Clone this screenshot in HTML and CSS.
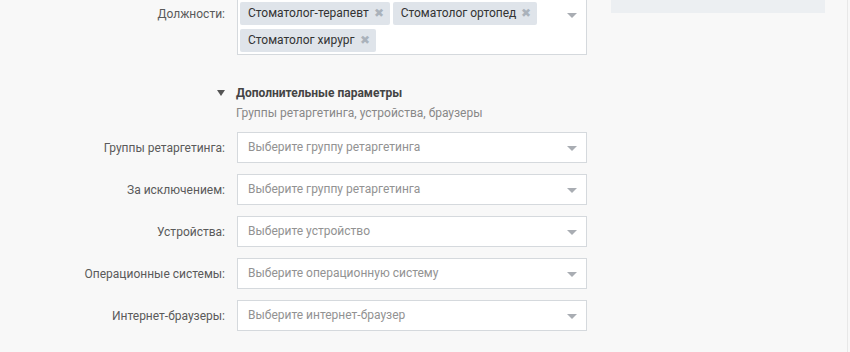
FILE: index.html
```html
<!DOCTYPE html>
<html lang="ru">
<head>
    <meta charset="UTF-8">
    <title>Параметры таргетинга</title>
    <link rel="stylesheet" href="styles.css">
</head>
<body>
    <div class="page">
        <div class="form">
            <div class="row row-multi">
                <div class="label">Должности:</div>
                <div class="field multi">
                    <div class="tags">
                        <span class="tag">Стоматолог-терапевт <span class="tag-x">&#x2716;</span></span>
                        <span class="tag">Стоматолог ортопед <span class="tag-x">&#x2716;</span></span>
                        <span class="tag">Стоматолог хирург <span class="tag-x">&#x2716;</span></span>
                    </div>
                    <span class="arrow arrow-top"></span>
                </div>
            </div>

            <div class="extra">
                <div class="extra-title"><span class="toggle"></span>Дополнительные параметры</div>
                <div class="extra-sub">Группы ретаргетинга, устройства, браузеры</div>
            </div>

            <div class="row">
                <div class="label">Группы ретаргетинга:</div>
                <div class="field select"><span class="placeholder">Выберите группу ретаргетинга</span><span class="arrow"></span></div>
            </div>
            <div class="row">
                <div class="label">За исключением:</div>
                <div class="field select"><span class="placeholder">Выберите группу ретаргетинга</span><span class="arrow"></span></div>
            </div>
            <div class="row">
                <div class="label">Устройства:</div>
                <div class="field select"><span class="placeholder">Выберите устройство</span><span class="arrow"></span></div>
            </div>
            <div class="row">
                <div class="label">Операционные системы:</div>
                <div class="field select"><span class="placeholder">Выберите операционную систему</span><span class="arrow"></span></div>
            </div>
            <div class="row">
                <div class="label">Интернет-браузеры:</div>
                <div class="field select"><span class="placeholder">Выберите интернет-браузер</span><span class="arrow"></span></div>
            </div>
        </div>

        <div class="side">
            <div class="side-block"></div>
        </div>
    </div>
</body>
</html>
```

FILE: styles.css
```css
body {
    margin: 0;
    background-color: #f8f8f8;
    font-family: Roboto, "Noto Sans", sans-serif;
    font-size: 12px;
    color: #333;
}
.page {
    display: flex;
    height: 352px;
    overflow: hidden;
    border-right: 1px solid #e8e8e8;
    box-sizing: border-box;
    width: 848px;
}
.form {
    width: 587px;
    margin-top: -5px;
}
.row {
    display: flex;
    align-items: center;
    margin-bottom: 11px;
}
.row-multi {
    align-items: flex-start;
    margin-bottom: 0;
}
.row-multi .label {
    padding-top: 12px;
}
.label {
    width: 237px;
    padding-right: 12px;
    text-align: right;
    color: #5a5a5a;
    box-sizing: border-box;
}
.field {
    position: relative;
    width: 350px;
    box-sizing: border-box;
    background-color: #fff;
    border: 1px solid #d5d9dd;
}
.select {
    height: 31px;
    line-height: 29px;
    padding-left: 10px;
}
.placeholder {
    color: #929292;
}
.multi {
    padding: 6px 40px 2px 2px;
}
.tags {
    display: flex;
    flex-wrap: wrap;
    gap: 4px 3px;
}
.tag {
    display: inline-block;
    background-color: #dfe4ea;
    color: #333;
    height: 23px;
    line-height: 23px;
    padding: 0 6px 0 8px;
    border-radius: 2px;
}
.tag-x {
    color: #aab2bb;
    font-size: 12px;
    margin-left: 2px;
}
.arrow {
    position: absolute;
    right: 9px;
    top: 13px;
    width: 0;
    height: 0;
    border-left: 5px solid transparent;
    border-right: 5px solid transparent;
    border-top: 5px solid #a9adb3;
}
.arrow-top {
    top: 17px;
}
.extra {
    padding-left: 236px;
    margin-top: 29px;
    margin-bottom: 9px;
}
.extra-title {
    position: relative;
    font-weight: bold;
    color: #444;
    line-height: 18px;
}
.toggle {
    position: absolute;
    left: -19px;
    top: 6px;
    border-left: 4px solid transparent;
    border-right: 4px solid transparent;
    border-top: 6px solid #555;
}
.extra-sub {
    color: #888;
    line-height: 20px;
    margin-top: 1px;
}
.side {
    margin-left: 24px;
}
.side-block {
    width: 214px;
    height: 13px;
    background-color: #eceff2;
}
```
